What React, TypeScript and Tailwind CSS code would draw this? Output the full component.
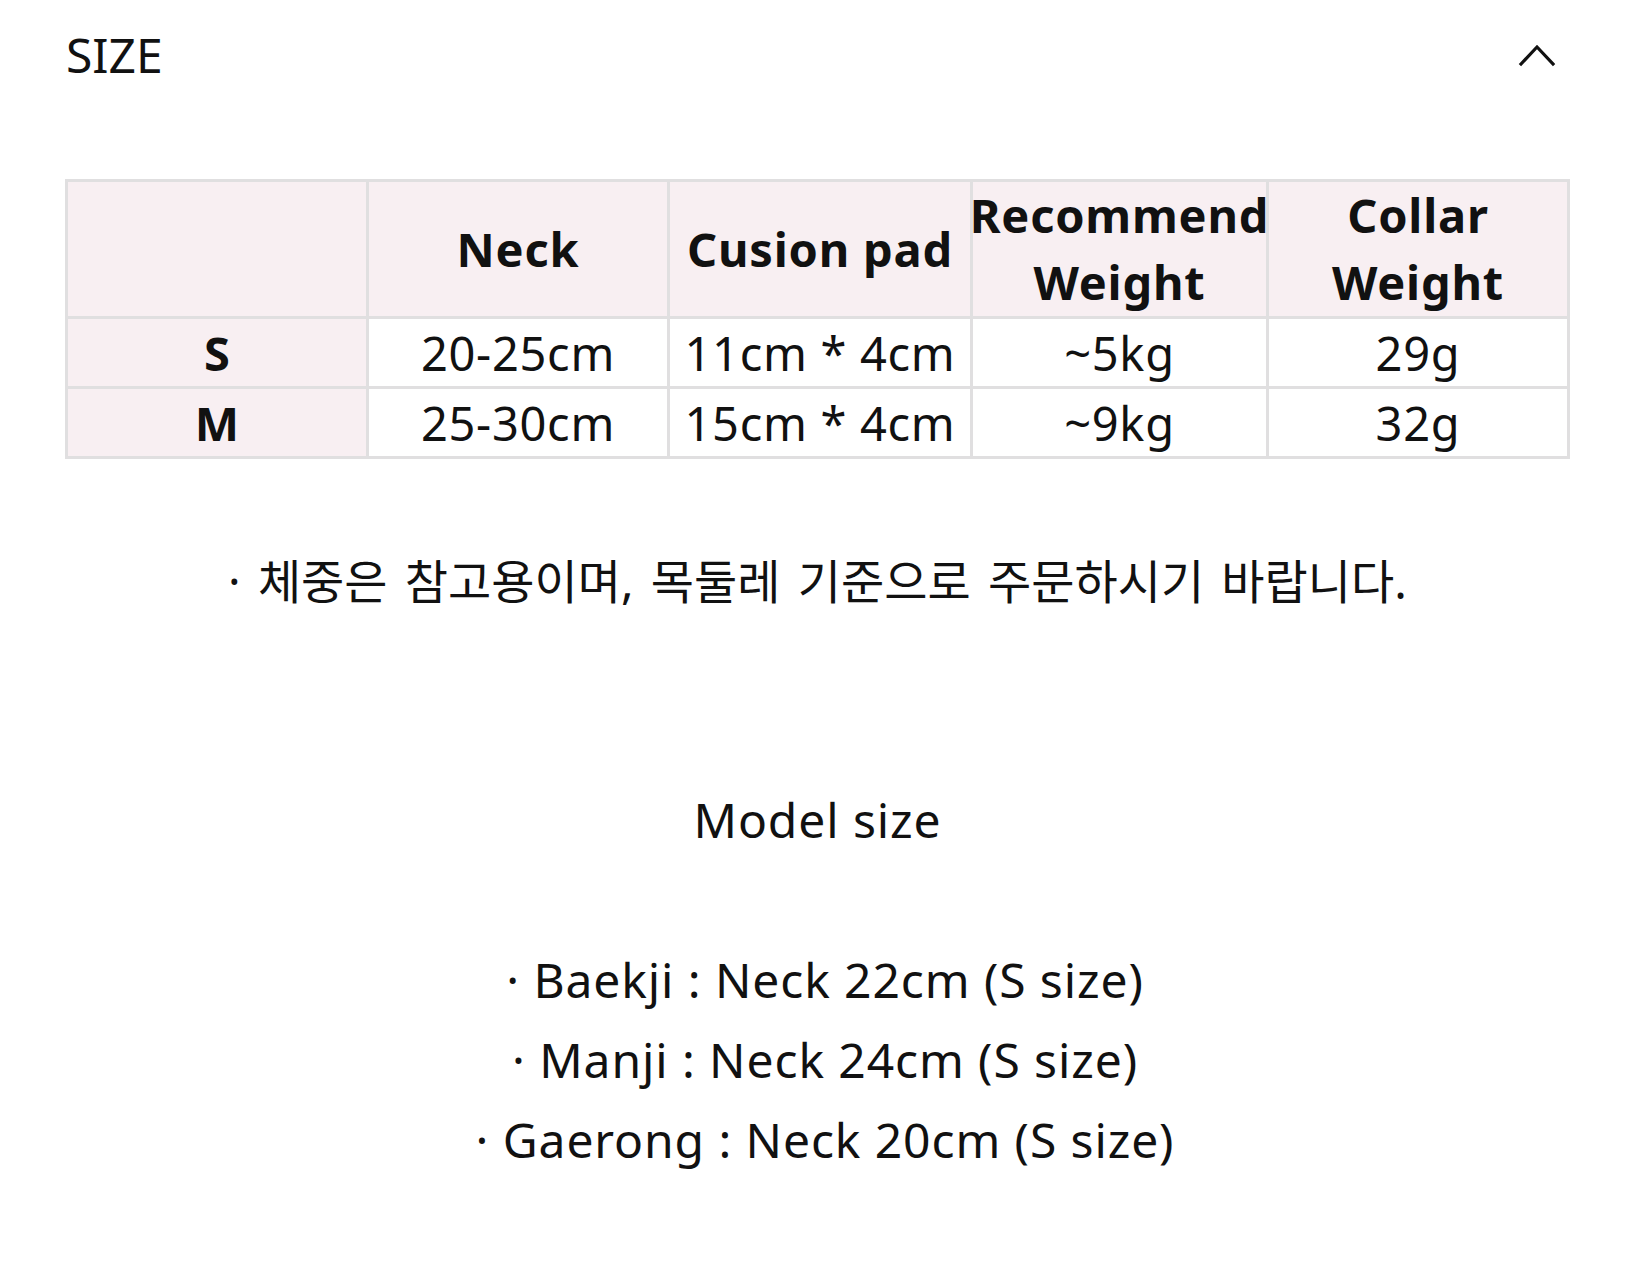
import React from "react";

const head = ["", "Neck", "Cusion pad", "Recommend\nWeight", "Collar\nWeight"];
const rows = [
  ["S", "20-25cm", "11cm * 4cm", "~5kg", "29g"],
  ["M", "25-30cm", "15cm * 4cm", "~9kg", "32g"],
];

export default function App() {
  return (
    <div
      className="w-[1635px] min-h-[1280px] bg-white text-[#111] px-[65px]"
      style={{ fontFamily: '"Noto Sans", "Noto Sans CJK KR", sans-serif' }}
    >
      <div className="h-[110px] flex items-center justify-between">
        <span className="text-[48px] leading-[48px] pl-[1px]">SIZE</span>
        <svg width="38" height="24" viewBox="0 0 38 24" className="mr-[14px]" fill="none">
          <polyline points="3,21 19,4 35,21" stroke="#111" strokeWidth="3.2" strokeLinecap="square" />
        </svg>
      </div>

      <div className="mt-[69px] grid grid-cols-[298px_298px_300px_293px_1fr] gap-[3px] p-[3px] bg-[#e0dfe0]">
        {head.map((h, i) => (
          <div
            key={i}
            className="bg-[#f8eff2] h-[134px] flex items-center justify-center text-center font-bold text-[47px] leading-[67px] whitespace-pre tracking-[0.8px]"
          >
            {h}
          </div>
        ))}
        {rows.map((r) =>
          r.map((c, j) => (
            <div
              key={r[0] + j}
              className={
                j === 0
                  ? "bg-[#f8eff2] h-[67px] flex items-center justify-center font-bold text-[47px] leading-[67px] pt-[2px]"
                  : "bg-white h-[67px] flex items-center justify-center text-[47px] leading-[67px] whitespace-nowrap tracking-[0.7px] pt-[2px]"
              }
            >
              {c}
            </div>
          ))
        )}
      </div>

      <p className="mt-[82px] text-center text-[47px] leading-[80px] [word-spacing:5px]">
        · 체중은 참고용이며, 목둘레 기준으로 주문하시기 바랍니다.
      </p>

      <p className="mt-[159px] text-center text-[48px] leading-[80px] tracking-[0.9px]">Model size</p>

      <div className="mt-[80px] flex flex-col items-center text-[48px] leading-[80px] pl-[15px] tracking-[0.9px]">
        <p>· Baekji : Neck 22cm (S size)</p>
        <p>· Manji : Neck 24cm (S size)</p>
        <p>· Gaerong : Neck 20cm (S size)</p>
      </div>
    </div>
  );
}
